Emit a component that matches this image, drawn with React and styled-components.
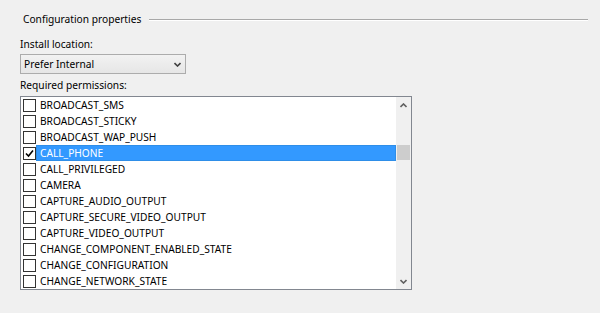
import React from "react";
import styled, { createGlobalStyle } from "styled-components";

const Global = createGlobalStyle`
  html, body { margin: 0; padding: 0; background: #f0f0f0; }
  body { font-family: "Noto Sans", "Open Sans", sans-serif; font-size: 10.2px; color: #000; }
`;

const Page = styled.div`
  width: 600px;
  height: 313px;
  box-sizing: border-box;
  padding: 11px 12px 0 20px;
  background: #f0f0f0;
`;

const GroupHeader = styled.div`
  display: flex;
  align-items: center;
  height: 16px;
  padding-left: 3px;
  gap: 8px;
`;

const GroupTitle = styled.span`
  white-space: nowrap;
  line-height: 16px;
`;

const GroupLine = styled.div`
  flex: 1;
  height: 1px;
  margin-top: 1px;
  background: #a8a8a8;
  box-shadow: 0 1px 0 #fff;
`;

const Label = styled.div`
  line-height: 16px;
  margin-top: ${(p) => p.$top}px;
`;

const Select = styled.div`
  margin-top: 2px;
  width: 166px;
  height: 20px;
  box-sizing: border-box;
  border: 1px solid #acacac;
  background: linear-gradient(#f2f2f2, #e6e6e6);
  display: flex;
  align-items: center;
  justify-content: space-between;
  padding: 0 4px 0 3px;
`;

const ListBox = styled.div`
  margin-top: 3px;
  width: 392px;
  height: 194px;
  box-sizing: border-box;
  border: 1px solid #828790;
  background: #fff;
  display: grid;
  grid-template-columns: 1fr 15px;
`;

const Rows = styled.div`
  display: flex;
  flex-direction: column;
  overflow: hidden;
`;

const Row = styled.div`
  height: 16px;
  display: flex;
  align-items: center;
  padding-left: 2px;
`;

const Check = styled.div`
  width: 13px;
  height: 13px;
  box-sizing: border-box;
  border: 1px solid #333;
  background: #fff;
  flex: none;
  display: flex;
  align-items: center;
  justify-content: center;
`;

const RowText = styled.div`
  flex: 1;
  height: 16px;
  box-sizing: border-box;
  line-height: 14px;
  padding-left: 3px;
  border: 1px solid ${(p) => (p.$sel ? "#2e8ee8" : "transparent")};
  background: ${(p) => (p.$sel ? "#3399ff" : "transparent")};
  color: ${(p) => (p.$sel ? "#fff" : "#000")};
  white-space: nowrap;
`;

const ScrollBar = styled.div`
  background: #f0f0f0;
  display: flex;
  flex-direction: column;
  align-items: center;
`;

const ArrowBtn = styled.div`
  height: 16px;
  width: 100%;
  display: flex;
  align-items: center;
  justify-content: center;
`;

const Track = styled.div`
  flex: 1;
  width: 100%;
  display: flex;
  flex-direction: column;
  padding-top: 32px;
`;

const Thumb = styled.div`
  margin: 0 1px;
  height: 15px;
  background: #cdcdcd;
`;

const Chevron = ({ up, color = "#606060" }) => (
  <svg width="7" height="5" viewBox="0 0 7 5">
    <path
      d={up ? "M0.5 4 L3.5 1 L6.5 4" : "M0.5 1 L3.5 4 L6.5 1"}
      fill="none"
      stroke={color}
      strokeWidth="1.6"
    />
  </svg>
);

const perms = [
  "BROADCAST_SMS",
  "BROADCAST_STICKY",
  "BROADCAST_WAP_PUSH",
  "CALL_PHONE",
  "CALL_PRIVILEGED",
  "CAMERA",
  "CAPTURE_AUDIO_OUTPUT",
  "CAPTURE_SECURE_VIDEO_OUTPUT",
  "CAPTURE_VIDEO_OUTPUT",
  "CHANGE_COMPONENT_ENABLED_STATE",
  "CHANGE_CONFIGURATION",
  "CHANGE_NETWORK_STATE",
];

export default function App() {
  return (
    <>
      <Global />
      <Page>
        <GroupHeader>
          <GroupTitle>Configuration properties</GroupTitle>
          <GroupLine />
        </GroupHeader>
        <Label $top={9}>Install location:</Label>
        <Select>
          <span>Prefer Internal</span>
          <Chevron color="#404040" />
        </Select>
        <Label $top={3}>Required permissions:</Label>
        <ListBox>
          <Rows>
            {perms.map((p) => {
              const sel = p === "CALL_PHONE";
              return (
                <Row key={p}>
                  <Check>
                    {sel && (
                      <svg width="9" height="9" viewBox="0 0 9 9">
                        <path d="M1 4.5 L3.5 7 L8 1.5" fill="none" stroke="#000" strokeWidth="1.6" />
                      </svg>
                    )}
                  </Check>
                  <RowText $sel={sel}>{p}</RowText>
                </Row>
              );
            })}
          </Rows>
          <ScrollBar>
            <ArrowBtn>
              <Chevron up />
            </ArrowBtn>
            <Track>
              <Thumb />
            </Track>
            <ArrowBtn>
              <Chevron />
            </ArrowBtn>
          </ScrollBar>
        </ListBox>
      </Page>
    </>
  );
}
